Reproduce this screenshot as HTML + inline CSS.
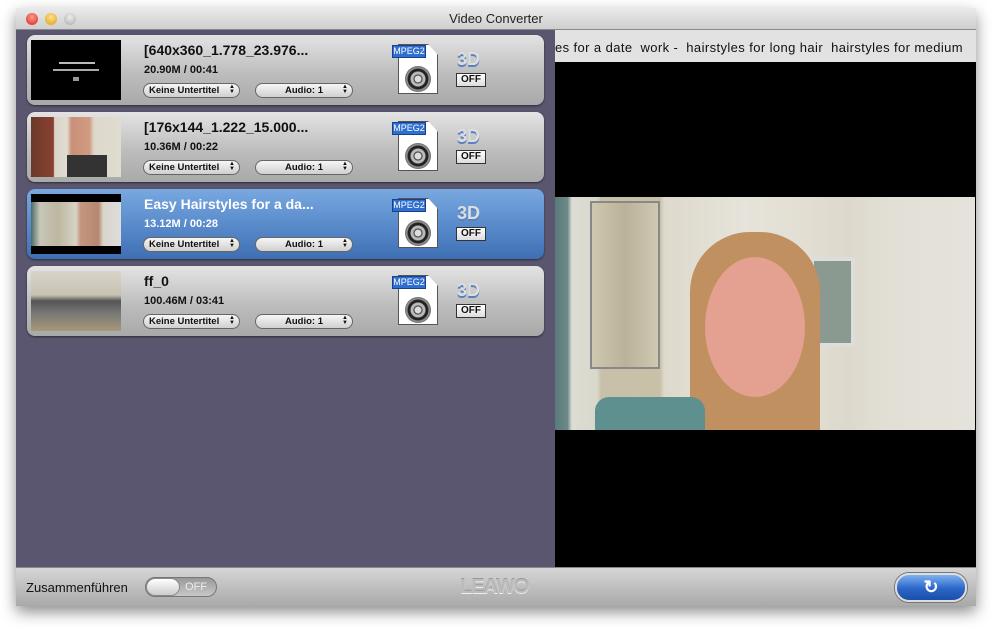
<!DOCTYPE html>
<html><head><meta charset="utf-8"><style>
*{margin:0;padding:0;box-sizing:border-box}
body{width:992px;height:631px;background:#fff;position:relative;overflow:hidden;font-family:"Liberation Sans",sans-serif}
.win{position:absolute;left:16px;top:8px;width:960px;height:598px;box-shadow:0 6px 14px rgba(0,0,0,.45);background:#5b566f}
.title{position:absolute;left:0;top:0;width:960px;height:22px;background:linear-gradient(#eaeaea,#cfcfcf);border-bottom:1px solid #8a8a8a;text-align:center;font-size:13px;line-height:22px;color:#222}
.dot{position:absolute;top:5px;width:12px;height:12px;border-radius:50%}
.left{position:absolute;left:0;top:22px;width:539px;height:537px;background:#5b566f}
.right{position:absolute;left:539px;top:22px;width:421px;height:537px;background:#000}
.strip{position:absolute;left:0;top:0;width:421px;height:32px;background:#e2e2e2;font-size:13px;line-height:36px;color:#111;white-space:nowrap;overflow:hidden;letter-spacing:0.4px}
.video{position:absolute;left:0;top:167px;width:420px;height:233px;background:linear-gradient(90deg,#5a7a7a 0,#6b8a88 3%,#dcdcd4 4%,#d8d8cc 10%,#c8c0a8 11%,#c9c1a7 25%,#ddd9cc 26%,#e6e3da 45%,#e2ded2 60%,#ddd8cc 70%,#e2e0d6 80%,#e4e2da 100%)}
.card{position:absolute;left:11px;width:517px;height:70px;border-radius:8px;background:linear-gradient(#e4e4e4,#bdbdbd 55%,#a9a9a9);box-shadow:0 1px 2px rgba(0,0,0,.5)}
.card.sel{background:linear-gradient(#79a8e0,#5a8ccc 50%,#3e6fb4)}
.thumb{position:absolute;left:4px;top:5px;width:90px;height:60px;background:#000}
.name{position:absolute;left:117px;top:7px;font-size:14px;font-weight:bold;color:#111}
.size{position:absolute;left:117px;top:29px;font-size:11px;font-weight:bold;color:#111}
.sel .name,.sel .size{color:#fff}
.pill{position:absolute;top:48px;height:15px;border-radius:8px;background:linear-gradient(#f6f6f6,#cfcfcf);border:1px solid #666;font-size:9.5px;font-weight:bold;line-height:13px;color:#111}
.p1{left:116px;width:97px;padding-left:5px}
.p2{left:228px;width:98px;text-align:center}
.pill i{position:absolute;right:4px;top:1px;font-style:normal;font-size:6px;line-height:5px;width:6px;text-align:center}
.file{position:absolute;left:371px;top:9px;width:40px;height:50px;background:#fff;border:1px solid #555;clip-path:polygon(0 0,75% 0,100% 22%,100% 100%,0 100%)}
.mpeg{position:absolute;left:365px;top:10px;width:34px;height:13px;background:#2f6fd0;border:1px solid #1b3f88;color:#fff;font-size:9px;line-height:11px;text-align:center}
.reel{position:absolute;left:378px;top:31px;width:26px;height:26px;border-radius:50%;background:radial-gradient(#ddd 0 3px,#333 4px,#bbb 5px,#bbb 7px,#222 8px,#222 10px,#999 11px,#666 13px)}
.d3{position:absolute;left:430px;top:14px;font-size:18px;font-weight:bold;color:#ddd;text-shadow:0 2px 0 #5a7fc0}
.off{position:absolute;left:429px;top:38px;width:30px;height:14px;background:linear-gradient(#fff,#ddd);border:1px solid #333;font-size:10px;font-weight:bold;text-align:center;line-height:12px;color:#111}
.bottom{position:absolute;left:0;top:559px;width:960px;height:39px;background:linear-gradient(#d6d6d6,#a9a9a9);border-top:1px solid #888}
</style></head><body>
<div class="win">
<div class="title">Video Converter
<div class="dot" style="left:10px;background:radial-gradient(circle at 50% 35%,#ff9a8a,#d8261c)"></div>
<div class="dot" style="left:29px;background:radial-gradient(circle at 50% 35%,#ffe08a,#e0a010)"></div>
<div class="dot" style="left:48px;background:radial-gradient(circle at 50% 35%,#eee,#aaa)"></div>
</div>
<div class="left">
<div class="card" style="top:5px"><div class="thumb"><div style="position:absolute;left:28px;top:22px;width:36px;height:2px;background:#bbb"></div><div style="position:absolute;left:22px;top:29px;width:46px;height:2px;background:#aaa"></div><div style="position:absolute;left:42px;top:37px;width:6px;height:4px;background:#999"></div></div>
<div class="name">[640x360_1.778_23.976...</div><div class="size">20.90M / 00:41</div>
<div class="pill p1">Keine Untertitel<i>▲<br>▼</i></div><div class="pill p2">Audio: 1<i>▲<br>▼</i></div>
<div class="file"></div><div class="mpeg">MPEG2</div><div class="reel"></div><div class="d3">3D</div><div class="off">OFF</div></div>

<div class="card" style="top:82px"><div class="thumb" style="background:linear-gradient(90deg,#6b3a2a 0,#8a4030 25%,#d8d4c8 26%,#e2dcd0 40%,#c89078 45%,#d29a80 65%,#dcd8cc 70%,#e0dcd0 100%)"><div style="position:absolute;left:36px;top:38px;width:40px;height:22px;background:#333"></div></div>
<div class="name">[176x144_1.222_15.000...</div><div class="size">10.36M / 00:22</div>
<div class="pill p1">Keine Untertitel<i>▲<br>▼</i></div><div class="pill p2">Audio: 1<i>▲<br>▼</i></div>
<div class="file"></div><div class="mpeg">MPEG2</div><div class="reel"></div><div class="d3">3D</div><div class="off">OFF</div></div>

<div class="card sel" style="top:159px"><div class="thumb"><div style="position:absolute;left:0;top:8px;width:90px;height:44px;background:linear-gradient(90deg,#4a6a6a,#c8c6b8 10%,#bdb7a0 30%,#d7d3c6 50%,#c49680 55%,#b48870 75%,#d8d4c8 80%,#ddd 100%)"></div></div>
<div class="name">Easy Hairstyles for a da...</div><div class="size">13.12M / 00:28</div>
<div class="pill p1">Keine Untertitel<i>▲<br>▼</i></div><div class="pill p2">Audio: 1<i>▲<br>▼</i></div>
<div class="file"></div><div class="mpeg">MPEG2</div><div class="reel"></div><div class="d3">3D</div><div class="off">OFF</div></div>

<div class="card" style="top:236px"><div class="thumb" style="background:linear-gradient(#d8d4c8 0,#c8c2b4 40%,#555 50%,#777 70%,#a89878 100%)"></div>
<div class="name">ff_0</div><div class="size">100.46M / 03:41</div>
<div class="pill p1">Keine Untertitel<i>▲<br>▼</i></div><div class="pill p2">Audio: 1<i>▲<br>▼</i></div>
<div class="file"></div><div class="mpeg">MPEG2</div><div class="reel"></div><div class="d3">3D</div><div class="off">OFF</div></div>
</div>
<div class="right">
<div class="strip">es for a date&nbsp; work - &nbsp;hairstyles for long hair &nbsp;hairstyles for medium</div>
<div class="video">
<div style="position:absolute;left:35px;top:4px;width:70px;height:168px;background:linear-gradient(90deg,#cfc8b0,#bab29a,#cfc8b2);border:2px solid #888"></div>
<div style="position:absolute;left:255px;top:60px;width:45px;height:90px;background:#8a9a90;border:4px solid #ddd"></div>
<div style="position:absolute;left:135px;top:35px;width:130px;height:198px;border-radius:60px 60px 0 0;background:#c09060"></div>
<div style="position:absolute;left:150px;top:60px;width:100px;height:140px;border-radius:50%;background:#e4a090"></div>
<div style="position:absolute;left:40px;top:200px;width:110px;height:33px;border-radius:14px 14px 0 0;background:#5e9090"></div>
</div>
</div>
<div class="bottom">
<div style="position:absolute;left:10px;top:12px;font-size:13px;color:#111">Zusammenführen</div>
<div style="position:absolute;left:129px;top:9px;width:72px;height:20px;border-radius:10px;background:linear-gradient(#999,#c8c8c8);border:1px solid #777;color:#eee;font-size:11px;line-height:18px;padding-left:39px">OFF</div>
<div style="position:absolute;left:130px;top:10px;width:34px;height:18px;border-radius:9px;background:linear-gradient(#fff,#ccc);border:1px solid #888"></div>
<div style="position:absolute;left:444px;top:8px;font-size:20px;font-weight:bold;color:#bbb;text-shadow:0 1px 0 #eee,0 -1px 0 #999;letter-spacing:-1px">LEAWO</div>
<div style="position:absolute;left:879px;top:5px;width:72px;height:29px;border-radius:14px;background:linear-gradient(#7fb0f0,#2a66c8 55%,#1a4fa8);border:2px solid #ddd;box-shadow:0 0 0 1px #777;color:#fff;font-size:18px;font-weight:bold;text-align:center;line-height:25px">↻</div>
</div>
</div>
</body></html>
